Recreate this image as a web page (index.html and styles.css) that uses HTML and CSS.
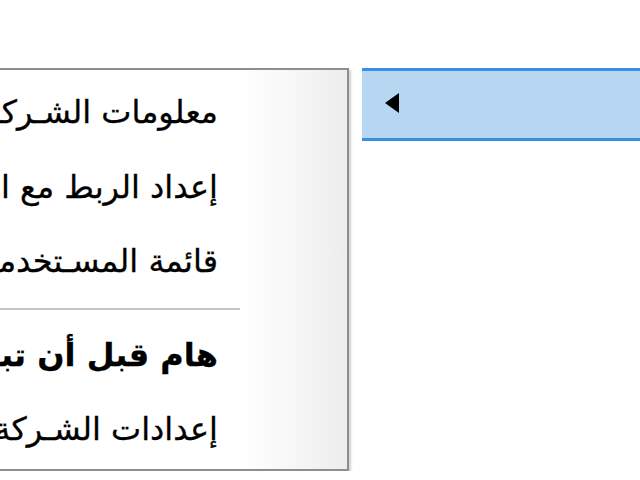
FILE: index.html
```html
<!DOCTYPE html>
<html lang="ar">
<head>
  <meta charset="UTF-8" />
  <title>Menu</title>
  <link rel="stylesheet" href="styles.css">
</head>
<body>

<div class="screen">
  <!-- Submenu popup (opens to the left) -->
  <div class="menu" dir="rtl">
    <div class="menu-item">معلومات الشـركة</div>
    <div class="menu-item">إعداد الربط مع البنك</div>
    <div class="menu-item">قائمة المسـتخدمين</div>
    <div class="menu-sep"></div>
    <div class="menu-item bold">هام قبل أن تبدأ</div>
    <div class="menu-item">إعدادات الشـركة</div>
  </div>

  <!-- Highlighted parent item -->
  <div class="parent-item">
    <span class="arrow"></span>
  </div>
</div>

</body>
</html>
```

FILE: styles.css
```css
/* Page */
body {
  margin: 0;
  background: #ffffff;
  overflow: hidden;
  font-family: Tahoma, "DejaVu Sans", sans-serif;
}

.screen {
  display: flex;
  align-items: flex-start;
  padding-top: 68px;
  gap: 13px;
}

/* Popup menu */
.menu {
  flex: none;
  width: 400px;
  margin-left: -51px;
  box-sizing: border-box;
  border: 2px solid #8e8e8e;
  padding: 6px 0 1px;
  background: linear-gradient(to left, #ededed 0, #f8f8f8 60px, #ffffff 105px);
  box-shadow: 2px 2px 2px rgba(0, 0, 0, 0.18);
}

.menu-item {
  height: 74.5px;
  line-height: 72px;
  padding-right: 129px;
  font-size: 32px;
  color: #000;
  -webkit-text-stroke: 0.3px #000;
  white-space: nowrap;
  text-align: right;
}

.menu-item.bold {
  font-weight: bold;
}

.menu-sep {
  height: 19px;
  margin-right: 107px;
  display: flex;
  align-items: center;
}

.menu-sep::before {
  content: "";
  display: block;
  width: 100%;
  height: 2px;
  background: #c5c5c5;
}

/* Highlighted parent item */
.parent-item {
  flex: 1;
  height: 67px;
  background: #b7d6f2;
  border-top: 3px solid #3a8ee4;
  border-bottom: 3px solid #3a8ee4;
  display: flex;
  align-items: center;
  padding-left: 23px;
}

.arrow {
  width: 0;
  height: 0;
  border-top: 10px solid transparent;
  border-bottom: 10px solid transparent;
  border-right: 14px solid #000;
  margin-top: -3px;
}
```
